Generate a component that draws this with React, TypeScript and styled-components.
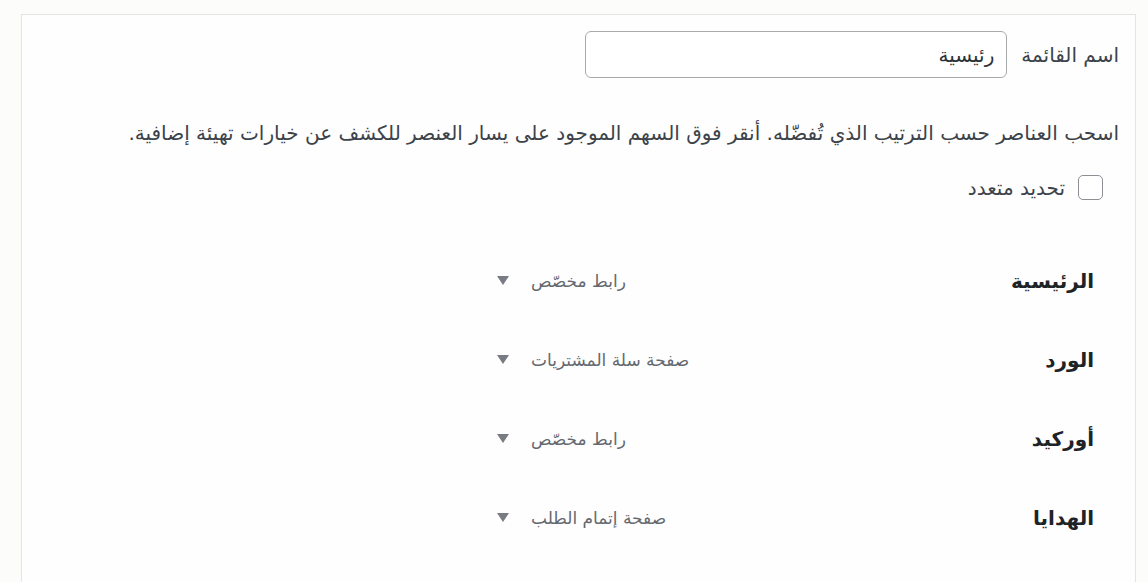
import styled, { createGlobalStyle } from 'styled-components'

const GlobalStyle = createGlobalStyle`
  html, body {
    margin: 0;
    padding: 0;
    background: #fcfcfb;
  }
  body {
    font-family: "DejaVu Sans", "Noto Sans", sans-serif;
    color: #3c434a;
  }
`

const Panel = styled.div`
  direction: rtl;
  box-sizing: border-box;
  margin: 14px 0 0 21px;
  width: 1115px;
  height: 600px;
  background: #fefefe;
  border: 1px solid #e4e4e4;
  border-bottom: none;
  padding: 16px 16px 0 16px;
`

const NameRow = styled.div`
  display: flex;
  align-items: center;
  gap: 14px;
`

const Label = styled.label`
  font-size: 20px;
  color: #3c434a;
`

const NameInput = styled.input`
  box-sizing: border-box;
  width: 422px;
  height: 47px;
  border: 1px solid #a7aaad;
  border-radius: 6px;
  background: #fff;
  padding: 0 12px;
  font-family: inherit;
  font-size: 20px;
  color: #2c3338;
  direction: rtl;
  outline: none;
`

const Hint = styled.p`
  margin: 43px 0 0;
  font-size: 20px;
  line-height: 24px;
  color: #3c434a;
`

const BulkRow = styled.label`
  display: flex;
  align-items: center;
  gap: 13px;
  margin: 30px 16px 0 0;
  font-size: 20px;
  color: #3c434a;
`

const Check = styled.span`
  box-sizing: border-box;
  width: 25px;
  height: 25px;
  border: 1px solid #8c8f94;
  border-radius: 5px;
  background: #fff;
`

const MenuList = styled.ul`
  list-style: none;
  margin: 41px 0 0;
  padding: 0;
`

const Item = styled.li`
  box-sizing: border-box;
  width: 638px;
  height: 79px;
  padding: 0 25px 0 16px;
  display: flex;
  align-items: center;
  justify-content: space-between;
`

const Title = styled.span`
  font-size: 20px;
  font-weight: 700;
  color: #1d2327;
`

const Controls = styled.span`
  display: flex;
  align-items: center;
  gap: 22px;
  font-size: 17px;
  color: #646970;
`

const Arrow = styled.span`
  width: 0;
  height: 0;
  border-left: 6px solid transparent;
  border-right: 6px solid transparent;
  border-top: 9px solid #787c82;
`

const items = [
  { title: 'الرئيسية', type: 'رابط مخصّص' },
  { title: 'الورد', type: 'صفحة سلة المشتريات' },
  { title: 'أوركيد', type: 'رابط مخصّص' },
  { title: 'الهدايا', type: 'صفحة إتمام الطلب' },
]

export default function App() {
  return <>
    <GlobalStyle />
    <Panel>
      <NameRow>
        <Label>اسم القائمة</Label>
        <NameInput defaultValue='رئيسية' />
      </NameRow>
      <Hint>اسحب العناصر حسب الترتيب الذي تُفضّله. أنقر فوق السهم الموجود على يسار العنصر للكشف عن خيارات تهيئة إضافية.</Hint>
      <BulkRow>
        <Check />
        تحديد متعدد
      </BulkRow>
      <MenuList>
        {items.map(item => <Item key={item.title}>
          <Title>{item.title}</Title>
          <Controls>
            {item.type}
            <Arrow />
          </Controls>
        </Item>)}
      </MenuList>
    </Panel>
  </>
}
